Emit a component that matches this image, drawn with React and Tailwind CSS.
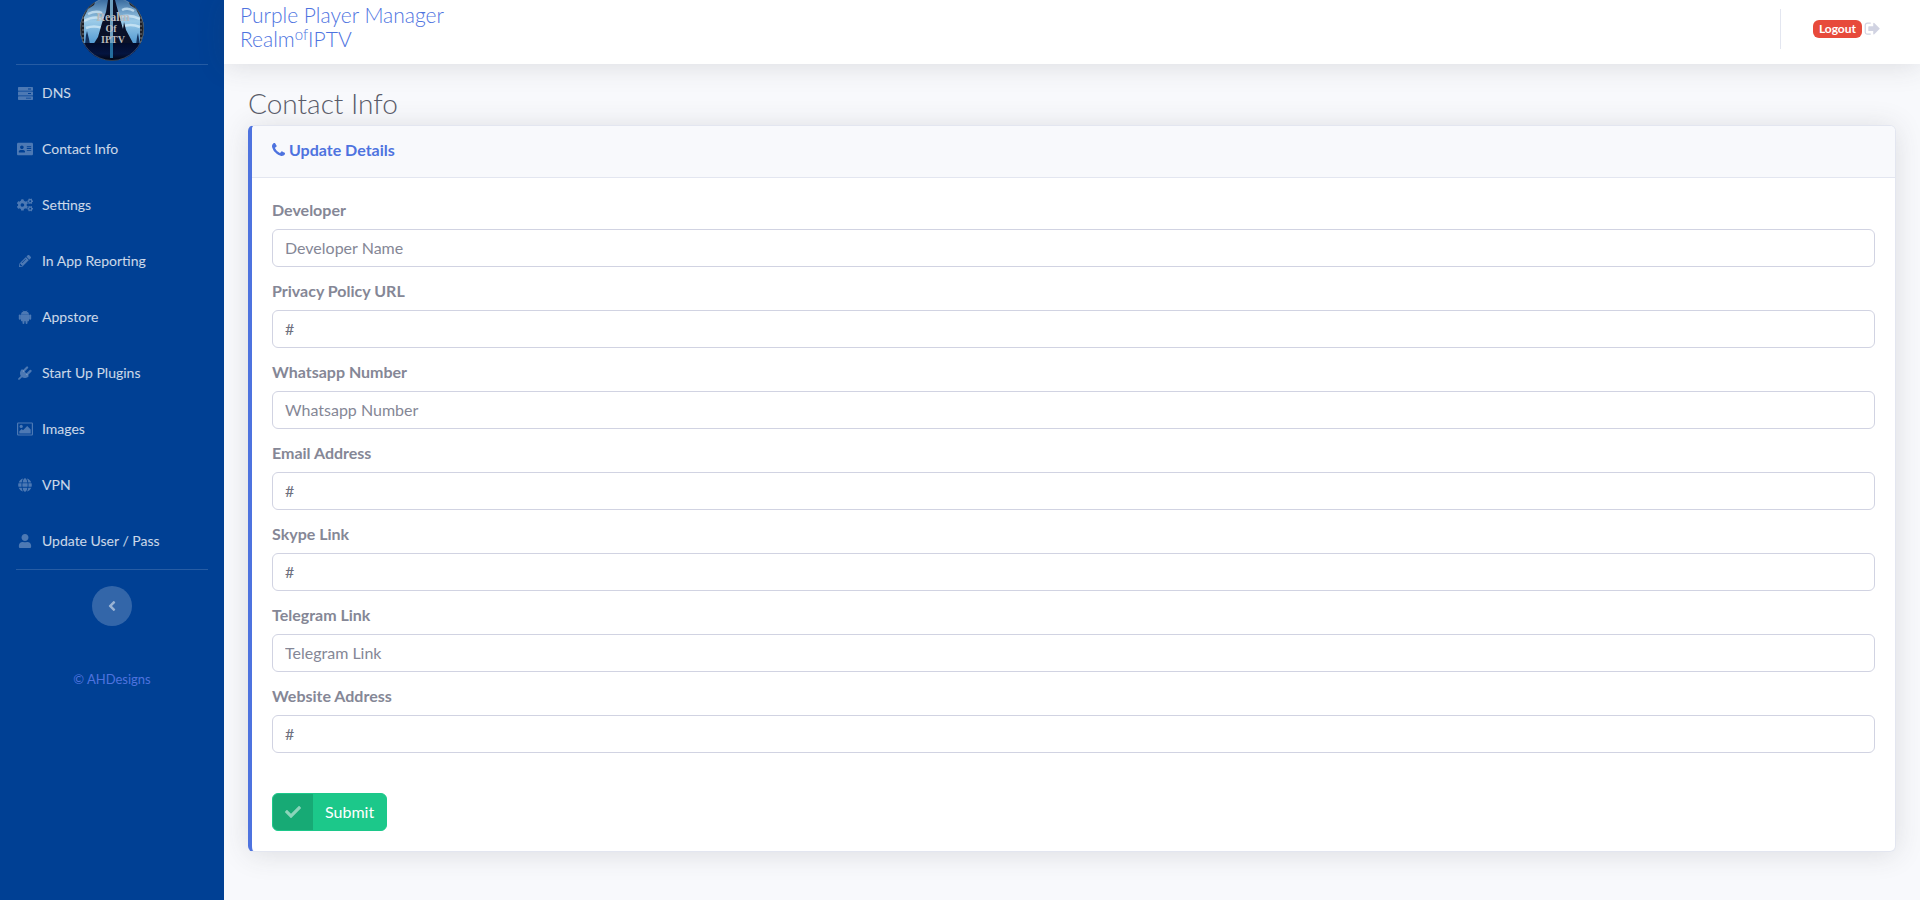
import {
  FaAddressCard,
  FaAngleLeft,
  FaCheck,
  FaCogs,
  FaGlobe,
  FaPencilAlt,
  FaUser,
} from "react-icons/fa";

function ServerIcon({ className }) {
  return (
    <svg viewBox="0 0 15 13" fill="currentColor" className={className} aria-hidden="true">
      <path
        fillRule="evenodd"
        d="M.7 0h13.6q.7 0 .7.7v2.6q0 .5-.7.5H.7Q0 3.8 0 3.3V.7Q0 0 .7 0zM10 1.6v.9h3v-.9zM.5 4.6h14q.5 0 .5.5v2.8q0 .5-.5.5H.5Q0 8.400 0 7.9V5.1q0-.5.5-.5zM10 6.1v.9h3v-.9zM.7 9.2h13.6q.7 0 .7.5v2.6q0 .7-.7.7H.7q-.7 0-.7-.7V9.7q0-.5.7-.5zM8 10.7v.9h5v-.9z"
      />
    </svg>
  );
}

function AndroidIcon({ className }) {
  return (
    <svg viewBox="0 0 14 14" fill="currentColor" className={className} aria-hidden="true">
      <path d="M3 4.300a3.800 3.300 0 0 1 2.200-2.800L4.600.4l.3-.2.7 1.100a4.200 4.200 0 0 1 2.800 0L9.100.2l.3.2-.6 1.100a3.800 3.300 0 0 1 2.200 2.800zM3 4.500h8v5.900a.9.900 0 0 1-.9.900h-.6v1.700a.9.900 0 0 1-1.900 0v-1.700H6.400v1.700a.9.900 0 0 1-1.900 0v-1.700h-.6a.9.900 0 0 1-.9-.9z" />
      <rect x="0.8" y="4.400" width="2.100" height="5.400" rx="1" />
      <rect x="11.100" y="4.400" width="2.100" height="5.400" rx="1" />
    </svg>
  );
}

function PlugIcon({ className }) {
  return (
    <svg viewBox="0 0 14 14" fill="currentColor" className={className} aria-hidden="true">
      <path d="M4 3 11 10q-1.700 1.900-3.700 2-1.900.1-3.300-.8L1.400 13.800H.2v-1.200L2.800 10q-.9-1.400-.8-3.300Q2.200 4.600 4 3z" />
      <path d="M5.900 4.700 9.100 1.500M9.300 8.100l3.200-3.200" stroke="currentColor" strokeWidth="2.200" strokeLinecap="round" />
    </svg>
  );
}

function ImageIcon({ className }) {
  return (
    <svg viewBox="0 0 16 13" fill="currentColor" className={className} aria-hidden="true">
      <path fillRule="evenodd" d="M1.200 0h13.600Q16 0 16 1.200v10.600q0 1.200-1.200 1.200H1.200Q0 13 0 11.800V1.200Q0 0 1.200 0zM1.200 1v11h13.600V1z" />
      <circle cx="4.200" cy="3.900" r="1.600" />
      <path d="M2.300 11V8.800l2.400-2.400 1.300 1.300L10.200 3.500l3.500 3.500v4z" />
    </svg>
  );
}

function PhoneIcon({ className }) {
  return (
    <svg viewBox="0 0 1408 1408" fill="currentColor" className={className} aria-hidden="true">
      <path d="M1408 1112q0 27-10 70.500t-21 68.500q-21 50-122 106-94 51-186 51-27 0-53-3.500t-57.500-12.500-47-14.500-55.500-20.500-49-18q-98-35-175-83-127-79-264-216t-216-264q-48-77-83-175-3-9-18-49t-20.500-55.500-14.500-47-12.500-57.500-3.500-53q0-92 51-186 56-101 106-122 25-11 68.500-21t70.500-10q14 0 21 3 18 6 53 76 11 19 30 54t35 63.500 31 53.500q3 4 17.500 25t21.500 35.500 7 28.500q0 20-28.500 50t-62 55-62 53-28.500 46q0 9 5 22.500t8.500 20.500 14 24 11.500 19q76 137 174 235t235 174q2 1 19 11.500t24 14 20.500 8.500 22.500 5q18 0 46-28.500t53-62 55-62 50-28.500q14 0 28.500 7t35.500 21.500 25 17.500q25 15 53.500 31t63.500 35 54 30q70 35 76 53 3 7 3 21z" />
    </svg>
  );
}

function SignOutIcon({ className }) {
  return (
    <svg viewBox="0 100 1664 1664" fill="currentColor" className={className} aria-hidden="true">
      <path d="M704 1440q0 4 1 20t.5 26.500-3 23.500-10 19.500-20.500 6.500h-320q-119 0-203.500-84.500t-84.500-203.500v-704q0-119 84.500-203.500t203.500-84.500h320q13 0 22.500 9.500t9.500 22.500q0 4 1 20t.5 26.500-3 23.500-10 19.500-20.500 6.500h-320q-66 0-113 47t-47 113v704q0 66 47 113t113 47h312l11.500 1 11.500 3 8 5.500 7 9 2 13.500zm928-544q0 26-19 45l-544 544q-19 19-45 19t-45-19-19-45v-288h-448q-26 0-45-19t-19-45v-384q0-26 19-45t45-19h448v-288q0-26 19-45t45-19 45 19l544 544q19 19 19 45z" />
    </svg>
  );
}

function Logo() {
  return (
    <svg viewBox="0 0 64 64" className="size-16" role="img" aria-label="Realm Of IPTV">
      <defs>
        <clipPath id="logo-clip">
          <circle cx="32" cy="32" r="32" />
        </clipPath>
        <linearGradient id="logo-sky" x1="0" y1="0" x2="0" y2="1">
          <stop offset="0" stopColor="#2c5f96" />
          <stop offset="0.5" stopColor="#9ccbe8" />
          <stop offset="1" stopColor="#4d96d0" />
        </linearGradient>
        <linearGradient id="logo-sea" x1="0" y1="0" x2="0" y2="1">
          <stop offset="0" stopColor="#020c2b" />
          <stop offset="0.6" stopColor="#041440" />
          <stop offset="1" stopColor="#02040c" />
        </linearGradient>
      </defs>
      <g clipPath="url(#logo-clip)">
        <rect width="64" height="48" fill="url(#logo-sky)" />
        <path
          d="M4 24q10-6 20-2M6 31q8-3 16 0M40 20q10-3 20 2M42 30q8-4 18 0M8 17q8-4 14-1M42 13q6-3 12 1"
          stroke="#d8eefa"
          strokeWidth="2.5"
          fill="none"
          opacity=".7"
        />
        <path d="M13 48l5-8 4-14 4-11 2-12h7l4 15 4 14 1-7 2 8 8 15z" fill="#0a1128" />
        <path d="M5 48l1-10 1-4 2 8 1 6zM56 48l1-8 1-4 2 12z" fill="#12305c" />
        <rect x="30" width="3" height="46" fill="#8fd0f2" opacity=".75" />
        <path d="M0 0h17l-3 8-6 4-4 8v28H0zM64 0H47l3 8 6 4 4 8v28h4z" fill="#1d1f26" />
        <path d="M3 20v26M61 20v26" stroke="#777b80" strokeWidth="1" strokeDasharray="2 2" />
        <g fill="#b8babd" fontFamily="Liberation Serif, serif" fontWeight="700" textAnchor="middle">
          <text x="33" y="24" fontSize="12">Realm</text>
          <text x="31" y="35" fontSize="10">Of</text>
          <text x="33" y="46" fontSize="10">IPTV</text>
        </g>
        <rect y="46" width="64" height="18" fill="url(#logo-sea)" />
        <rect x="30" y="46" width="3" height="15" fill="#2d86b8" opacity=".8" />
      </g>
      <circle cx="32" cy="32" r="31.5" fill="none" stroke="#8aa0b4" strokeWidth=".6" opacity=".6" />
    </svg>
  );
}

const NAV_ITEMS = [
  { label: "DNS", icon: ServerIcon, size: "size-[15px]" },
  { label: "Contact Info", icon: FaAddressCard, size: "size-4" },
  { label: "Settings", icon: FaCogs, size: "size-4" },
  { label: "In App Reporting", icon: FaPencilAlt, size: "size-3" },
  { label: "Appstore", icon: AndroidIcon, size: "size-[14px]" },
  { label: "Start Up Plugins", icon: PlugIcon, size: "size-[14px]" },
  { label: "Images", icon: ImageIcon, size: "size-4" },
  { label: "VPN", icon: FaGlobe, size: "size-[14px]" },
  { label: "Update User / Pass", icon: FaUser, size: "size-[14px]" },
];

const FIELDS = [
  { id: "developer", label: "Developer", placeholder: "Developer Name" },
  { id: "privacy", label: "Privacy Policy URL", value: "#" },
  { id: "whatsapp", label: "Whatsapp Number", placeholder: "Whatsapp Number" },
  { id: "email", label: "Email Address", value: "#" },
  { id: "skype", label: "Skype Link", value: "#" },
  { id: "telegram", label: "Telegram Link", placeholder: "Telegram Link" },
  { id: "website", label: "Website Address", value: "#" },
];

function Sidebar() {
  return (
    <aside className="flex w-56 shrink-0 flex-col bg-[#004094]">
      <a href="#" className="-mt-[3px] flex h-[67px] justify-center">
        <Logo />
      </a>
      <hr className="mx-4 border-white/15" />

      <nav>
        {NAV_ITEMS.map(({ label, icon: Icon, size }) => (
          <a key={label} href="#" className="flex h-14 items-center gap-2 px-4 text-sm text-white/80">
            <span className="flex w-[18px] justify-center text-white/30">
              <Icon className={size} />
            </span>
            {label}
          </a>
        ))}
      </nav>
      <hr className="mx-4 border-white/15" />

      <button
        type="button"
        aria-label="Collapse sidebar"
        className="mx-auto mt-4 flex size-10 items-center justify-center rounded-full bg-white/20 text-white/50"
      >
        <FaAngleLeft className="size-4" />
      </button>
      <a href="#" className="mt-11 text-center text-[13px] leading-[18px] text-[#4e73df]">
        © AHDesigns
      </a>
    </aside>
  );
}

function Topbar() {
  return (
    <header className="flex h-16 shrink-0 items-center justify-between bg-white pr-10 pl-4 shadow-[0_2px_28px_0_rgba(58,59,69,0.15)]">
      <p className="-mt-2.5 text-[21px] leading-6 font-light text-[#4e73df]">
        Purple Player Manager
        <br />
        Realm<sup className="text-[15px]">of</sup>IPTV
      </p>
      <div className="-mt-1.5 flex items-center">
        <div className="mr-8 h-10 w-px bg-[#e3e6f0]" />
        <a href="#" className="flex items-center gap-0.5">
          <span className="rounded-md bg-[#e74a3b] px-1.5 text-xs leading-[18px] font-bold text-white">
            Logout
          </span>
          <SignOutIcon className="size-4 text-[#d1d3e2]" />
        </a>
      </div>
    </header>
  );
}

function Field({ field }) {
  return (
    <div className="mb-3">
      <label htmlFor={field.id} className="mb-[7px] block leading-6 font-bold">
        {field.label}
      </label>
      <input
        id={field.id}
        type="text"
        defaultValue={field.value}
        placeholder={field.placeholder}
        className="block h-[38px] w-full rounded-md border border-[#d1d3e2] bg-white px-3 pb-0.5 text-[#6e707e] placeholder:text-[#858796]"
      />
    </div>
  );
}

export default function App() {
  return (
    <div className="flex min-h-screen bg-[#f8f9fc] font-[Lato,sans-serif] text-base text-[#858796]">
      <Sidebar />
      <div className="flex min-w-0 flex-1 flex-col">
        <Topbar />
        <main className="px-6 pt-5">
          <h1 className="mb-[3px] text-[28px] leading-[38px] font-light text-[#5a5c69]">Contact Info</h1>

          <section className="overflow-hidden rounded-md border border-l-4 border-[#e3e6f0] border-l-[#4e73df] bg-white shadow-[0_2px_28px_0_rgba(58,59,69,0.15)]">
            <h2 className="flex h-[52px] items-center gap-1 border-b border-[#e3e6f0] bg-[#f8f9fc] px-5 pb-1 font-bold text-[#4e73df]">
              <PhoneIcon className="size-[13px]" />
              Update Details
            </h2>
            <form className="p-5" onSubmit={(e) => e.preventDefault()}>
              {FIELDS.map((field) => (
                <Field key={field.id} field={field} />
              ))}
              <button
                type="submit"
                className="mt-10 flex h-[38px] items-stretch overflow-hidden rounded-md border border-[#1cc88a] bg-[#1cc88a] text-white"
              >
                <span className="flex w-10 items-center justify-center bg-black/15 text-white/50">
                  <FaCheck className="size-4" />
                </span>
                <span className="flex items-center px-3">Submit</span>
              </button>
            </form>
          </section>
        </main>
      </div>
    </div>
  );
}
